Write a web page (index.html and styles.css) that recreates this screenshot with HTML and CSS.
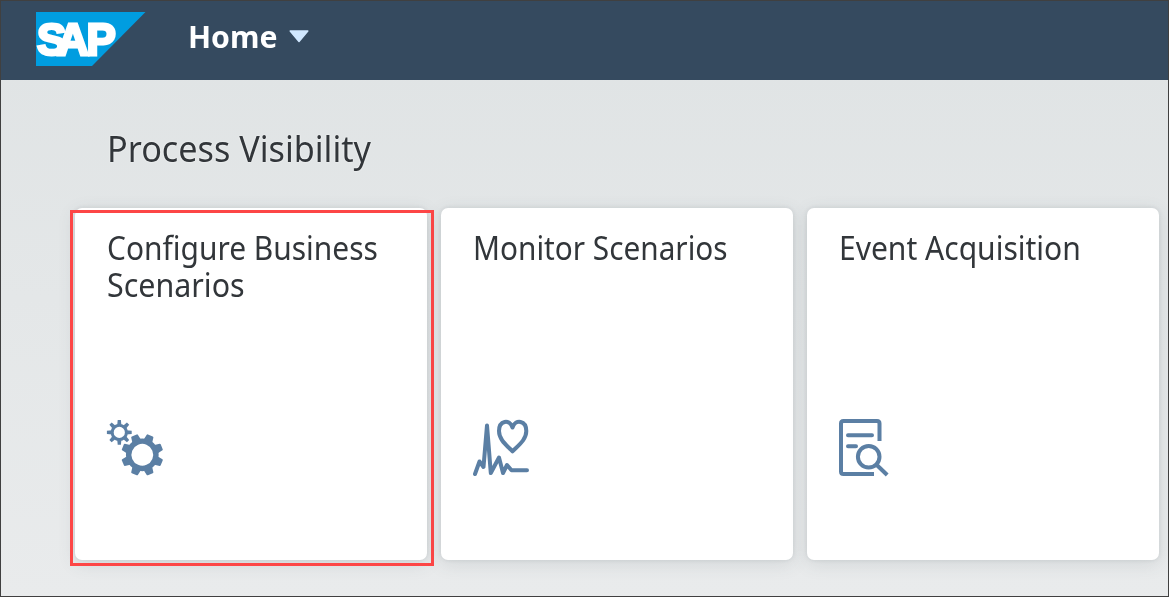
FILE: index.html
```html
<!DOCTYPE html>
<html lang="en">
<head>
<meta charset="utf-8">
<title>Home</title>
<link rel="stylesheet" href="styles.css">
</head>
<body>
<div class="shell">
  <header class="bar">
    <svg class="logo" width="110" height="54" viewBox="0 0 110 54" role="img" aria-label="SAP">
      <path d="M0 0H109.5L56 54H0Z" fill="#009de0"/>
      <text class="logo-text" x="1 21 50.5" y="42.7">SAP</text>
    </svg>
    <button class="menu"><span class="menu-label">Home</span>
      <svg width="20" height="13" viewBox="0 0 20 13"><path d="M1.2 1H18.8L10 11.5Z" fill="#d1e8ff" stroke="#d1e8ff" stroke-width="1.5" stroke-linejoin="round"/></svg>
    </button>
  </header>
  <main class="content">
    <h1 class="group-title"><span class="narrow">Process Visibility</span></h1>
    <div class="tiles">
      <section class="tile selected">
        <h2 class="tile-title"><span class="narrow configure">Configure Business</span><br><span class="narrow">Scenarios</span></h2>
        <svg class="icon" width="64" height="64" viewBox="0 0 64 64">
          <defs>
            <path id="big" d="M-4.5-15L-3.6-20.3Q-3.4-21-2.6-21H2.6Q3.4-21 3.6-20.3L4.5-15Z"/>
            <path id="small" d="M-2.1-7L-1.6-12.4H1.6L2.1-7Z"/>
          </defs>
          <g transform="translate(38.3 39.8) rotate(22.5)" fill="#5b7fa4">
            <circle r="13.6" fill="none" stroke="#5b7fa4" stroke-width="5.4"/>
            <use href="#big"/><use href="#big" transform="rotate(45)"/><use href="#big" transform="rotate(90)"/><use href="#big" transform="rotate(135)"/><use href="#big" transform="rotate(180)"/><use href="#big" transform="rotate(225)"/><use href="#big" transform="rotate(270)"/><use href="#big" transform="rotate(315)"/>
          </g>
          <g transform="translate(15.3 17.4)" fill="#5b7fa4">
            <circle r="7.1" fill="none" stroke="#5b7fa4" stroke-width="3"/>
            <use href="#small"/><use href="#small" transform="rotate(45)"/><use href="#small" transform="rotate(90)"/><use href="#small" transform="rotate(135)"/><use href="#small" transform="rotate(180)"/><use href="#small" transform="rotate(225)"/><use href="#small" transform="rotate(270)"/><use href="#small" transform="rotate(315)"/>
          </g>
        </svg>
      </section>
      <section class="tile">
        <h2 class="tile-title"><span class="narrow monitor">Monitor Scenarios</span></h2>
        <svg class="icon line" width="64" height="64" viewBox="0 0 64 64">
          <path d="M5 59L9.5 46.5L13.5 52L17 10.5L20.8 58L29 42.5L33 58L37 50L41.5 55.2H57"/>
          <path d="M42.5 36.3C36 29.8 29 24.5 29 16C29 5.5 39.5 3.5 42.5 12.5C45.5 3.5 56.3 5.5 56.3 16C56.3 24.5 49 29.8 42.5 36.3Z"/>
        </svg>
      </section>
      <section class="tile">
        <h2 class="tile-title"><span class="narrow event">Event Acquisition</span></h2>
        <svg class="icon line" width="64" height="64" viewBox="0 0 64 64">
          <path stroke-linecap="butt" d="M43.5 26V8.5Q43.5 6 41 6H7.5Q5 6 5 8.5V56.5Q5 59 7.5 59H38"/>
          <path d="M12 20.2H36M12 31.2H20"/>
          <circle cx="32.7" cy="41.8" r="10.8"/>
          <path stroke-linecap="butt" d="M40.8 50L51.2 60"/>
        </svg>
      </section>
    </div>
  </main>
</div>
</body>
</html>
```
FILE: styles.css
```css
*, *::after { box-sizing: border-box; }
body { margin: 0; font-family: "Noto Sans", sans-serif; color: #32363a; }
.shell { height: 597px; border: 1px solid #404040; background: linear-gradient(#dfe3e4, #e9ebec); overflow: hidden; }
.bar { height: 79px; background: #354a5f; display: flex; align-items: flex-start; padding: 11px 0 0 35px; }
.logo { flex: none; overflow: visible; filter: blur(.5px); }
.logo-text { font: 700 44px "Liberation Sans", sans-serif; fill: #fff; stroke: #fff; stroke-width: 2.8; }
.menu { display: flex; align-items: center; gap: 10px; height: 48px; margin-left: 42px; padding: 0; border: 0; background: none; color: #fff; font: 700 31px/48px "Noto Sans", sans-serif; }
.menu-label { width: 91px; text-align: left; white-space: nowrap; transform: scaleX(.975); transform-origin: left; }
.content { padding: 45px 0 0 72px; }
.group-title { margin: 0; padding-left: 34px; font-size: 36px; line-height: 48px; font-weight: 400; text-shadow: 0 0 2px #fff; white-space: nowrap; }
.tiles { display: flex; gap: 14px; margin-top: 35px; padding-left: 2px; }
.tile { flex: none; position: relative; width: 352px; height: 352px; padding: 21px 32px 84px; background: #fff; border-radius: 7px; box-shadow: 0 4px 18px rgba(60, 80, 85, .13), 0 0 4px rgba(60, 80, 85, .13); display: flex; flex-direction: column; justify-content: space-between; }
.selected::after { content: ""; position: absolute; left: -5px; top: 2px; width: 364px; height: 356px; border: 3px solid #fd4646; }
.tile-title { margin: 0; font-size: 32px; line-height: 37px; font-weight: 400; white-space: nowrap; }
/* Condensed letterforms for headings */
.narrow { display: inline-block; transform: scaleX(.95); transform-origin: left; }
.configure { transform: scaleX(.935); }
.monitor { transform: scaleX(.93); }
.event { transform: scaleX(.938); }
.icon { flex: none; margin: 0 0 -3px -3px; }
.line { fill: none; stroke: #5b7fa4; stroke-width: 4; stroke-linecap: round; stroke-linejoin: round; }
```
